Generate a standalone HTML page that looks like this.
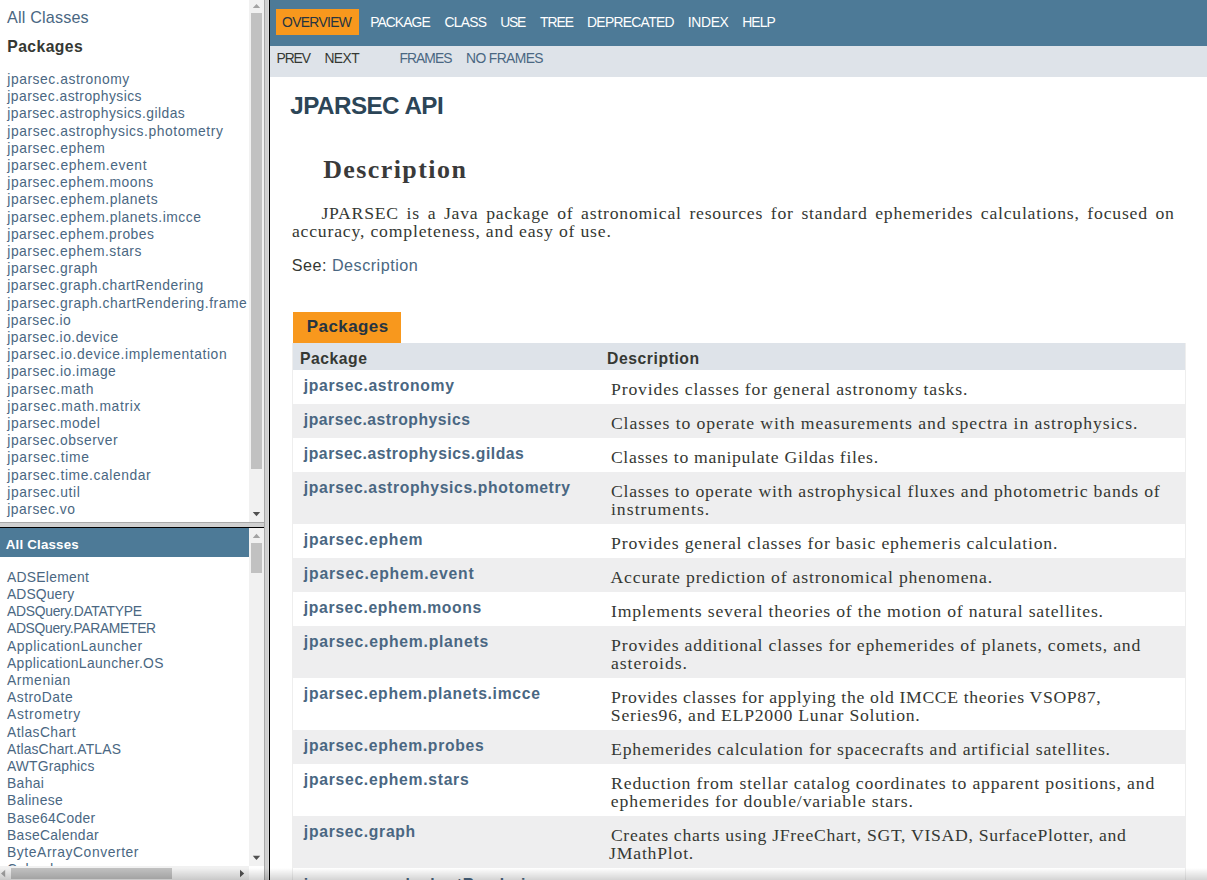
<!DOCTYPE html>
<html lang="en"><head><meta charset="utf-8"><title>Overview (JPARSEC API)</title>
<style>
html,body{margin:0;padding:0}
body{width:1207px;height:880px;overflow:hidden;position:relative;background:#fff;font-family:'Liberation Sans',sans-serif;color:#353833}
.frame{position:absolute;overflow:hidden;background:#fff}
.t{position:absolute;white-space:pre;line-height:0;color:#353833;text-decoration:none}
a.t{color:#4A6782}
.r{position:absolute}
.sb{position:absolute;background:#f1f1f1}
.thumb{position:absolute;background:#c1c1c1}
</style></head><body>

<!-- frameset borders -->
<div class="r" style="left:264px;top:0;width:1px;height:880px;background:#a8a8a8"></div>
<div class="r" style="left:265px;top:0;width:4px;height:880px;background:#d0d0d0"></div>
<div class="r" style="left:268px;top:0;width:1px;height:880px;background:#dadada"></div>
<div class="r" style="left:269px;top:0;width:1px;height:880px;background:#000"></div>
<div class="r" style="left:0;top:522px;width:264px;height:1px;background:#a8a8a8"></div>
<div class="r" style="left:0;top:523px;width:264px;height:4px;background:#d0d0d0"></div>
<div class="r" style="left:0;top:527px;width:264px;height:1px;background:#000"></div>

<!-- packageListFrame -->
<div class="frame" style="left:0;top:0;width:249px;height:522px">
<a class="t" style="left:6.97px;top:17.00px;font-size:16.17px;color:#4A6782;letter-spacing:0.179px;">All Classes</a>
<div class="t" style="left:7.26px;top:46.80px;font-size:15.73px;font-weight:bold;letter-spacing:0.425px;">Packages</div>
<a class="t" style="left:7.30px;top:78.90px;font-size:13.86px;color:#4A6782;letter-spacing:0.542px;">jparsec.astronomy</a>
<a class="t" style="left:7.30px;top:96.10px;font-size:13.86px;color:#4A6782;letter-spacing:0.457px;">jparsec.astrophysics</a>
<a class="t" style="left:7.30px;top:113.30px;font-size:13.86px;color:#4A6782;letter-spacing:0.455px;">jparsec.astrophysics.gildas</a>
<a class="t" style="left:7.30px;top:130.50px;font-size:13.86px;color:#4A6782;letter-spacing:0.562px;">jparsec.astrophysics.photometry</a>
<a class="t" style="left:7.30px;top:147.70px;font-size:13.86px;color:#4A6782;letter-spacing:0.547px;">jparsec.ephem</a>
<a class="t" style="left:7.30px;top:164.90px;font-size:13.86px;color:#4A6782;letter-spacing:0.586px;">jparsec.ephem.event</a>
<a class="t" style="left:7.30px;top:182.10px;font-size:13.86px;color:#4A6782;letter-spacing:0.532px;">jparsec.ephem.moons</a>
<a class="t" style="left:7.30px;top:199.30px;font-size:13.86px;color:#4A6782;letter-spacing:0.545px;">jparsec.ephem.planets</a>
<a class="t" style="left:7.30px;top:216.50px;font-size:13.86px;color:#4A6782;letter-spacing:0.547px;">jparsec.ephem.planets.imcce</a>
<a class="t" style="left:7.30px;top:233.70px;font-size:13.86px;color:#4A6782;letter-spacing:0.500px;">jparsec.ephem.probes</a>
<a class="t" style="left:7.30px;top:250.90px;font-size:13.86px;color:#4A6782;letter-spacing:0.519px;">jparsec.ephem.stars</a>
<a class="t" style="left:7.30px;top:268.10px;font-size:13.86px;color:#4A6782;letter-spacing:0.523px;">jparsec.graph</a>
<a class="t" style="left:7.30px;top:285.30px;font-size:13.86px;color:#4A6782;letter-spacing:0.496px;">jparsec.graph.chartRendering</a>
<a class="t" style="left:7.30px;top:302.50px;font-size:13.86px;color:#4A6782;letter-spacing:0.534px;">jparsec.graph.chartRendering.frame</a>
<a class="t" style="left:7.30px;top:319.70px;font-size:13.86px;color:#4A6782;letter-spacing:0.459px;">jparsec.io</a>
<a class="t" style="left:7.30px;top:336.90px;font-size:13.86px;color:#4A6782;letter-spacing:0.473px;">jparsec.io.device</a>
<a class="t" style="left:7.30px;top:354.10px;font-size:13.86px;color:#4A6782;letter-spacing:0.589px;">jparsec.io.device.implementation</a>
<a class="t" style="left:7.30px;top:371.30px;font-size:13.86px;color:#4A6782;letter-spacing:0.508px;">jparsec.io.image</a>
<a class="t" style="left:7.30px;top:388.50px;font-size:13.86px;color:#4A6782;letter-spacing:0.614px;">jparsec.math</a>
<a class="t" style="left:7.30px;top:405.70px;font-size:13.86px;color:#4A6782;letter-spacing:0.684px;">jparsec.math.matrix</a>
<a class="t" style="left:7.30px;top:422.90px;font-size:13.86px;color:#4A6782;letter-spacing:0.528px;">jparsec.model</a>
<a class="t" style="left:7.30px;top:440.10px;font-size:13.86px;color:#4A6782;letter-spacing:0.522px;">jparsec.observer</a>
<a class="t" style="left:7.30px;top:457.30px;font-size:13.86px;color:#4A6782;letter-spacing:0.624px;">jparsec.time</a>
<a class="t" style="left:7.30px;top:474.50px;font-size:13.86px;color:#4A6782;letter-spacing:0.585px;">jparsec.time.calendar</a>
<a class="t" style="left:7.30px;top:491.70px;font-size:13.86px;color:#4A6782;letter-spacing:0.561px;">jparsec.util</a>
<a class="t" style="left:7.30px;top:508.90px;font-size:13.86px;color:#4A6782;letter-spacing:0.492px;">jparsec.vo</a>
</div>
<div class="sb" style="left:249px;top:0;width:15px;height:522px"></div>
<div class="thumb" style="left:251px;top:13px;width:11px;height:456px"></div>

<!-- packageFrame -->
<div class="frame" style="left:0;top:528px;width:249px;height:338px">
<div class="r" style="left:0;top:0;width:249px;height:29px;background:#4D7A97"></div>
<div class="t" style="left:5.67px;top:16.80px;font-size:13.31px;color:#FFFFFF;font-weight:bold;letter-spacing:0.212px;">All Classes</div>
<a class="t" style="left:6.98px;top:48.80px;font-size:13.86px;color:#4A6782;letter-spacing:0.280px;">ADSElement</a>
<a class="t" style="left:6.98px;top:66.00px;font-size:13.86px;color:#4A6782;letter-spacing:0.133px;">ADSQuery</a>
<a class="t" style="left:6.98px;top:83.20px;font-size:13.86px;color:#4A6782;letter-spacing:-0.262px;">ADSQuery.DATATYPE</a>
<a class="t" style="left:6.98px;top:100.40px;font-size:13.86px;color:#4A6782;letter-spacing:-0.301px;">ADSQuery.PARAMETER</a>
<a class="t" style="left:6.98px;top:117.60px;font-size:13.86px;color:#4A6782;letter-spacing:0.529px;">ApplicationLauncher</a>
<a class="t" style="left:6.98px;top:134.80px;font-size:13.86px;color:#4A6782;letter-spacing:0.373px;">ApplicationLauncher.OS</a>
<a class="t" style="left:6.98px;top:152.00px;font-size:13.86px;color:#4A6782;letter-spacing:0.574px;">Armenian</a>
<a class="t" style="left:6.98px;top:169.20px;font-size:13.86px;color:#4A6782;letter-spacing:0.501px;">AstroDate</a>
<a class="t" style="left:6.98px;top:186.40px;font-size:13.86px;color:#4A6782;letter-spacing:0.687px;">Astrometry</a>
<a class="t" style="left:6.98px;top:203.60px;font-size:13.86px;color:#4A6782;letter-spacing:0.426px;">AtlasChart</a>
<a class="t" style="left:6.98px;top:220.80px;font-size:13.86px;color:#4A6782;letter-spacing:0.166px;">AtlasChart.ATLAS</a>
<a class="t" style="left:6.98px;top:238.00px;font-size:13.86px;color:#4A6782;letter-spacing:0.167px;">AWTGraphics</a>
<a class="t" style="left:7.06px;top:255.20px;font-size:13.86px;color:#4A6782;letter-spacing:0.330px;">Bahai</a>
<a class="t" style="left:7.06px;top:272.40px;font-size:13.86px;color:#4A6782;letter-spacing:0.358px;">Balinese</a>
<a class="t" style="left:7.06px;top:289.60px;font-size:13.86px;color:#4A6782;letter-spacing:0.338px;">Base64Coder</a>
<a class="t" style="left:7.06px;top:306.80px;font-size:13.86px;color:#4A6782;letter-spacing:0.332px;">BaseCalendar</a>
<a class="t" style="left:7.06px;top:324.00px;font-size:13.86px;color:#4A6782;letter-spacing:0.571px;">ByteArrayConverter</a>
<a class="t" style="left:6.94px;top:341.20px;font-size:13.86px;color:#4A6782;letter-spacing:0.465px;">Calendar</a>
</div>
<div class="sb" style="left:249px;top:528px;width:15px;height:338px"></div>
<div class="thumb" style="left:251px;top:543px;width:11px;height:30px"></div>
<div class="sb" style="left:0;top:866px;width:249px;height:14px"></div>
<div class="thumb" style="left:11px;top:868px;width:161px;height:11px"></div>
<div class="r" style="left:249px;top:866px;width:15px;height:14px;background:#fff"></div>

<!-- classFrame -->
<div class="frame" style="left:270px;top:0;width:937px;height:880px">
<div class="r" style="left:0;top:0;width:937px;height:46px;background:#4D7A97"></div>
<div class="r" style="left:6px;top:9px;width:83px;height:26px;background:#F8981D"></div>
<div class="r" style="left:0;top:46px;width:937px;height:31px;background:#dee3e9"></div>
<div class="r" style="left:23px;top:312px;width:108px;height:31px;background:#F8981D"></div>
<div class="r" style="left:22px;top:343px;width:894px;height:537px;background:#EEE"></div>
<div class="r" style="left:23px;top:343px;width:892px;height:27px;background:#dee3e9"></div>
<div class="r" style="left:23px;top:370px;width:892px;height:34px;background:#FFFFFF"></div>
<div class="r" style="left:23px;top:404px;width:892px;height:34px;background:#EEEEEF"></div>
<div class="r" style="left:23px;top:438px;width:892px;height:34px;background:#FFFFFF"></div>
<div class="r" style="left:23px;top:472px;width:892px;height:52px;background:#EEEEEF"></div>
<div class="r" style="left:23px;top:524px;width:892px;height:34px;background:#FFFFFF"></div>
<div class="r" style="left:23px;top:558px;width:892px;height:34px;background:#EEEEEF"></div>
<div class="r" style="left:23px;top:592px;width:892px;height:34px;background:#FFFFFF"></div>
<div class="r" style="left:23px;top:626px;width:892px;height:52px;background:#EEEEEF"></div>
<div class="r" style="left:23px;top:678px;width:892px;height:52px;background:#FFFFFF"></div>
<div class="r" style="left:23px;top:730px;width:892px;height:34px;background:#EEEEEF"></div>
<div class="r" style="left:23px;top:764px;width:892px;height:52px;background:#FFFFFF"></div>
<div class="r" style="left:23px;top:816px;width:892px;height:52px;background:#EEEEEF"></div>
<div class="r" style="left:23px;top:868px;width:892px;height:34px;background:#FFFFFF"></div>
<div class="t" style="left:12.04px;top:21.80px;font-size:13.86px;color:#253441;letter-spacing:-0.670px;">OVERVIEW</div>
<div class="t" style="left:100.16px;top:21.80px;font-size:13.86px;color:#FFFFFF;letter-spacing:-0.919px;">PACKAGE</div>
<div class="t" style="left:174.60px;top:21.80px;font-size:13.86px;color:#FFFFFF;letter-spacing:-0.741px;">CLASS</div>
<div class="t" style="left:230.23px;top:21.80px;font-size:13.86px;color:#FFFFFF;letter-spacing:-1.234px;">USE</div>
<div class="t" style="left:269.99px;top:21.80px;font-size:13.86px;color:#FFFFFF;letter-spacing:-0.992px;">TREE</div>
<div class="t" style="left:317.06px;top:21.80px;font-size:13.86px;color:#FFFFFF;letter-spacing:-0.699px;">DEPRECATED</div>
<div class="t" style="left:417.72px;top:21.80px;font-size:13.86px;color:#FFFFFF;letter-spacing:-0.304px;">INDEX</div>
<div class="t" style="left:472.16px;top:21.80px;font-size:13.86px;color:#FFFFFF;letter-spacing:-0.845px;">HELP</div>
<div class="t" style="left:6.61px;top:57.80px;font-size:13.86px;letter-spacing:-1.158px;">PREV</div>
<div class="t" style="left:54.41px;top:57.80px;font-size:13.86px;letter-spacing:-0.569px;">NEXT</div>
<a class="t" style="left:129.46px;top:57.80px;font-size:13.86px;color:#4A6782;letter-spacing:-0.939px;">FRAMES</a>
<a class="t" style="left:196.06px;top:57.80px;font-size:13.86px;color:#4A6782;letter-spacing:-0.612px;">NO FRAMES</a>
<div class="t" style="left:20.23px;top:106.00px;font-size:24.20px;color:#2c4557;font-weight:bold;letter-spacing:-0.514px;">JPARSEC API</div>
<div class="t" style="left:53.14px;top:170.00px;font-size:25.96px;color:#3a3a3a;font-weight:bold;font-family:'Liberation Serif',serif;letter-spacing:1.439px;">Description</div>
<div class="t" style="left:51.43px;top:213.00px;font-size:17.71px;font-family:'Liberation Serif',serif;width:853.27px;text-align:justify;text-align-last:justify;white-space:normal;letter-spacing:0.771px;">JPARSEC is a Java package of astronomical resources for standard ephemerides calculations, focused on</div>
<div class="t" style="left:21.88px;top:231.00px;font-size:17.71px;font-family:'Liberation Serif',serif;letter-spacing:0.805px;">accuracy, completeness, and easy of use.</div>
<div class="t" style="left:21.77px;top:264.80px;font-size:16.17px;letter-spacing:0.491px;">See: <span style="color:#4A6782">Description</span></div>
<div class="t" style="left:36.87px;top:327.30px;font-size:16.94px;color:#253441;font-weight:bold;letter-spacing:0.448px;">Packages</div>
<div class="t" style="left:30.05px;top:358.60px;font-size:15.73px;font-weight:bold;letter-spacing:0.517px;">Package</div>
<div class="t" style="left:337.05px;top:359.00px;font-size:15.73px;font-weight:bold;letter-spacing:0.561px;">Description</div>
<a class="t" style="left:33.85px;top:386.00px;font-size:15.73px;color:#4A6782;font-weight:bold;letter-spacing:0.644px;">jparsec.astronomy</a>
<div class="t" style="left:341.09px;top:388.60px;font-size:17.71px;font-family:'Liberation Serif',serif;letter-spacing:0.819px;">Provides classes for general astronomy tasks.</div>
<a class="t" style="left:33.85px;top:420.00px;font-size:15.73px;color:#4A6782;font-weight:bold;letter-spacing:0.512px;">jparsec.astrophysics</a>
<div class="t" style="left:340.89px;top:422.60px;font-size:17.71px;font-family:'Liberation Serif',serif;letter-spacing:0.912px;">Classes to operate with measurements and spectra in astrophysics.</div>
<a class="t" style="left:33.85px;top:454.00px;font-size:15.73px;color:#4A6782;font-weight:bold;letter-spacing:0.531px;">jparsec.astrophysics.gildas</a>
<div class="t" style="left:340.89px;top:456.60px;font-size:17.71px;font-family:'Liberation Serif',serif;letter-spacing:0.678px;">Classes to manipulate Gildas files.</div>
<a class="t" style="left:33.85px;top:488.00px;font-size:15.73px;color:#4A6782;font-weight:bold;letter-spacing:0.630px;">jparsec.astrophysics.photometry</a>
<div class="t" style="left:340.89px;top:490.60px;font-size:17.71px;font-family:'Liberation Serif',serif;letter-spacing:0.811px;">Classes to operate with astrophysical fluxes and photometric bands of</div>
<div class="t" style="left:340.93px;top:508.50px;font-size:17.71px;font-family:'Liberation Serif',serif;letter-spacing:1.032px;">instruments.</div>
<a class="t" style="left:33.85px;top:540.00px;font-size:15.73px;color:#4A6782;font-weight:bold;letter-spacing:0.720px;">jparsec.ephem</a>
<div class="t" style="left:341.09px;top:542.60px;font-size:17.71px;font-family:'Liberation Serif',serif;letter-spacing:0.805px;">Provides general classes for basic ephemeris calculation.</div>
<a class="t" style="left:33.85px;top:574.00px;font-size:15.73px;color:#4A6782;font-weight:bold;letter-spacing:0.799px;">jparsec.ephem.event</a>
<div class="t" style="left:340.49px;top:576.60px;font-size:17.71px;font-family:'Liberation Serif',serif;letter-spacing:0.808px;">Accurate prediction of astronomical phenomena.</div>
<a class="t" style="left:33.85px;top:608.00px;font-size:15.73px;color:#4A6782;font-weight:bold;letter-spacing:0.640px;">jparsec.ephem.moons</a>
<div class="t" style="left:340.96px;top:610.60px;font-size:17.71px;font-family:'Liberation Serif',serif;letter-spacing:0.801px;">Implements several theories of the motion of natural satellites.</div>
<a class="t" style="left:33.85px;top:642.00px;font-size:15.73px;color:#4A6782;font-weight:bold;letter-spacing:0.740px;">jparsec.ephem.planets</a>
<div class="t" style="left:341.09px;top:644.60px;font-size:17.71px;font-family:'Liberation Serif',serif;letter-spacing:0.800px;">Provides additional classes for ephemerides of planets, comets, and</div>
<div class="t" style="left:340.89px;top:662.50px;font-size:17.71px;font-family:'Liberation Serif',serif;letter-spacing:0.983px;">asteroids.</div>
<a class="t" style="left:33.85px;top:694.00px;font-size:15.73px;color:#4A6782;font-weight:bold;letter-spacing:0.678px;">jparsec.ephem.planets.imcce</a>
<div class="t" style="left:341.09px;top:696.60px;font-size:17.71px;font-family:'Liberation Serif',serif;letter-spacing:0.635px;">Provides classes for applying the old IMCCE theories VSOP87,</div>
<div class="t" style="left:340.86px;top:714.50px;font-size:17.71px;font-family:'Liberation Serif',serif;letter-spacing:0.748px;">Series96, and ELP2000 Lunar Solution.</div>
<a class="t" style="left:33.85px;top:746.00px;font-size:15.73px;color:#4A6782;font-weight:bold;letter-spacing:0.683px;">jparsec.ephem.probes</a>
<div class="t" style="left:341.09px;top:748.60px;font-size:17.71px;font-family:'Liberation Serif',serif;letter-spacing:0.793px;">Ephemerides calculation for spacecrafts and artificial satellites.</div>
<a class="t" style="left:33.85px;top:780.00px;font-size:15.73px;color:#4A6782;font-weight:bold;letter-spacing:0.711px;">jparsec.ephem.stars</a>
<div class="t" style="left:341.09px;top:782.60px;font-size:17.71px;font-family:'Liberation Serif',serif;letter-spacing:0.830px;">Reduction from stellar catalog coordinates to apparent positions, and</div>
<div class="t" style="left:340.83px;top:800.50px;font-size:17.71px;font-family:'Liberation Serif',serif;letter-spacing:0.866px;">ephemerides for double/variable stars.</div>
<a class="t" style="left:33.85px;top:832.00px;font-size:15.73px;color:#4A6782;font-weight:bold;letter-spacing:0.691px;">jparsec.graph</a>
<div class="t" style="left:340.89px;top:834.60px;font-size:17.71px;font-family:'Liberation Serif',serif;letter-spacing:0.688px;">Creates charts using JFreeChart, SGT, VISAD, SurfacePlotter, and</div>
<div class="t" style="left:339.08px;top:852.50px;font-size:17.71px;font-family:'Liberation Serif',serif;letter-spacing:0.785px;">JMathPlot.</div>
<a class="t" style="left:33.85px;top:885.00px;font-size:15.73px;color:#4A6782;font-weight:bold;letter-spacing:0.687px;">jparsec.graph.chartRendering</a>
<div class="t" style="left:340.89px;top:886.60px;font-size:17.71px;font-family:'Liberation Serif',serif;letter-spacing:0.904px;">Classes to render sky and planetary charts.</div>
</div>

<!-- scrollbar arrows -->
<svg class="r" style="left:0;top:0" width="1207" height="880">
<polygon points="252.8,8.1 260.2,8.1 256.5,3.9" fill="#a3a3a3"/>
<polygon points="252.8,512 260.2,512 256.5,516.2" fill="#505050"/>
<polygon points="252.8,537.9 260.2,537.9 256.5,533.7" fill="#a3a3a3"/>
<polygon points="252.8,855.8 260.2,855.8 256.5,860" fill="#505050"/>
<polygon points="5.2,869.8 5.2,877.2 1,873.5" fill="#a3a3a3"/>
<polygon points="240,869.8 240,877.2 244.2,873.5" fill="#505050"/>
</svg>
<div class="r" style="left:0;top:868px;width:1207px;height:12px;background:linear-gradient(to bottom,rgba(0,0,0,0),rgba(0,0,0,0.17))"></div>
</body></html>
